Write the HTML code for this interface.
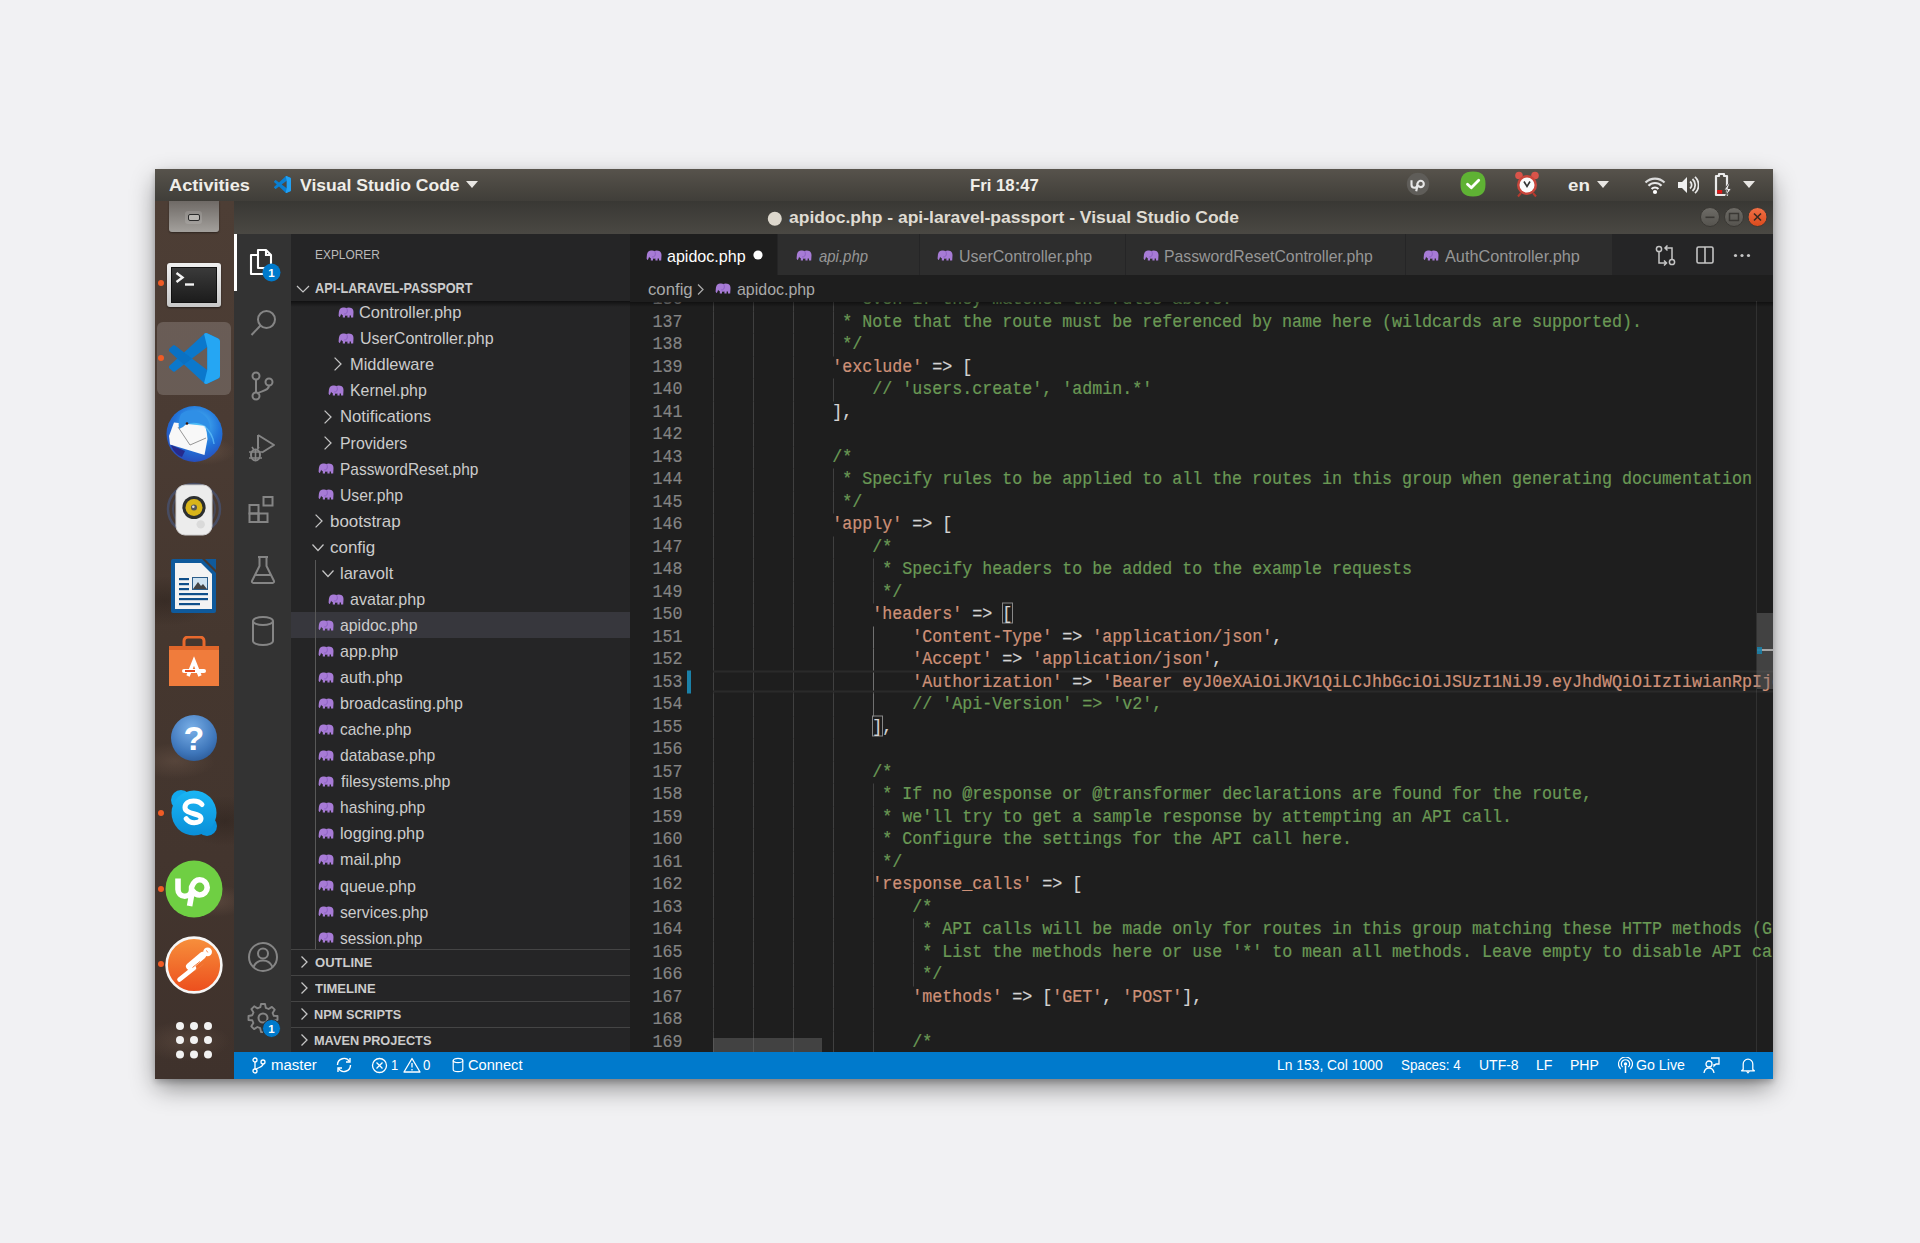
<!DOCTYPE html>
<html><head><meta charset="utf-8">
<style>
*{box-sizing:border-box;margin:0;padding:0}
html,body{width:1920px;height:1243px;overflow:hidden;background:#f1f1f3;font-family:"Liberation Sans",sans-serif}
.a{position:absolute}
.a>svg{display:block}
.clip{position:absolute;overflow:hidden}
.clip>.inner{position:absolute;left:0;top:0}
#win{position:absolute;left:155px;top:169px;width:1618px;height:910px;box-shadow:0 10px 24px -2px rgba(0,0,0,.45),0 3px 6px rgba(0,0,0,.2);background:#1e1e1e}
/* top bar */
#topbar{left:155px;top:169px;width:1618px;height:32px;background:linear-gradient(#57534c,#4a4741 55%,#403e39)}
.tbt{position:absolute;color:#f2f1ee;font-weight:bold;font-size:17.5px;top:176px;white-space:nowrap;text-shadow:0 1px 1px rgba(0,0,0,.4)}
#titlebar{left:234px;top:201px;width:1539px;height:33px;background:linear-gradient(#393834,#4a4843)}
#dock{left:155px;top:201px;width:79px;height:878px;background:
 radial-gradient(ellipse 30px 14px at 50px 250px,rgba(120,95,80,.45),transparent),
 radial-gradient(ellipse 40px 18px at 20px 560px,rgba(115,92,78,.4),transparent),
 radial-gradient(ellipse 35px 16px at 60px 700px,rgba(120,95,80,.4),transparent),
 radial-gradient(ellipse 45px 20px at 30px 840px,rgba(110,88,74,.4),transparent),
 radial-gradient(ellipse 40px 15px at 55px 1000px,rgba(110,88,74,.35),transparent),
 radial-gradient(ellipse 50px 25px at 10px 400px,rgba(30,22,18,.35),transparent),
 radial-gradient(ellipse 40px 25px at 70px 620px,rgba(30,22,18,.35),transparent),
 radial-gradient(ellipse 50px 30px at 20px 950px,rgba(30,22,18,.3),transparent),
 linear-gradient(#4d3e35,#4a3b33 25%,#45372f 50%,#43352e 75%,#3f322c)}
/* activity bar */
#actbar{left:234px;top:234px;width:57px;height:818px;background:#333333}
#sidebar{left:291px;top:234px;width:339px;height:818px;background:#252526}
#editor{left:630px;top:234px;width:1143px;height:818px;background:#1e1e1e}
#statusbar{left:234px;top:1052px;width:1539px;height:27px;background:#007acc;color:#fff;font-size:14px}
.sb{position:absolute;top:5px;white-space:nowrap}
/* tabs */
#tabs{left:630px;top:234px;width:1143px;height:41px;background:#252526}
.tab{position:absolute;top:234px;height:41px;background:#2d2d2d;border-right:1px solid #252526}
.tab .t{position:absolute;top:11px;font-size:15.4px;color:#969696;white-space:nowrap}
.tab .e{position:absolute;top:16px}
.tab .e svg,.e svg{display:block}
.tab.act{background:#1e1e1e}
.tab.act .t{color:#fff}
/* sidebar */
.row{position:absolute;left:291px;width:339px;height:26px}
.row.sel{background:#37373d}
.row .lbl{position:absolute;top:4px;font-size:16.2px;color:#cccccc;white-space:nowrap}
.row .ic{position:absolute;top:6px}
.row .ic .chev{position:absolute;top:-1px}
.eleph{display:block}
.shdr{position:absolute;left:291px;width:339px;height:26px;border-top:1px solid rgba(128,128,128,.35)}
.shdr .lbl{position:absolute;left:24px;top:5px;font-size:13px;font-weight:bold;color:#cccccc;white-space:nowrap;letter-spacing:-.1px}
.shdr .chev{position:absolute;left:5px;top:4px}
/* code */
.ln{position:absolute;height:22.5px;line-height:22.5px;font-family:"Liberation Mono",monospace;font-size:16.667px;white-space:pre;color:#d4d4d4;-webkit-text-stroke:.2px currentColor;transform:translateY(.7px) scaleY(1.1);transform-origin:0 15.6px}
.c{color:#6a9955}.s{color:#ce9178}.p{color:#d4d4d4}
.num{position:absolute;left:630px;width:52.5px;height:22.5px;line-height:22.5px;text-align:right;font-family:"Liberation Mono",monospace;font-size:16.667px;color:#858585;-webkit-text-stroke:.15px currentColor;transform:translateY(.9px) scaleY(1.12);transform-origin:0 15.6px}
.num.act{color:#c6c6c6}
.gd{position:absolute;width:1px;height:22.5px;background:#404040}
.gd.act{background:#707070}
.tx{position:absolute;white-space:nowrap;line-height:1;transform-origin:0 0}
.aico{position:absolute;left:234px;width:57px;height:60px}
</style></head><body>
<div id="win"></div>
<div class="a" id="topbar"></div>
<svg class="a" style="left:274px;top:176px" width="17" height="17" viewBox="0 0 100 100"><path fill="#0a7fd1" d="M96.46 10.8 75.86.87a6.23 6.23 0 0 0-7.1 1.2L29.35 38.04 12.19 25.01a4.16 4.16 0 0 0-5.32.24L1.36 30.26a4.16 4.16 0 0 0 0 6.16L16.24 50 1.36 63.58a4.16 4.16 0 0 0 0 6.16l5.51 5.01a4.16 4.16 0 0 0 5.32.24l17.16-13.03 39.41 35.97a6.23 6.23 0 0 0 7.1 1.2l20.6-9.92A6.25 6.25 0 0 0 100 83.58V16.42a6.25 6.25 0 0 0-3.54-5.63zM75.02 72.7 45.11 50l29.91-22.7z"/><path fill="#22a0f2" d="M75.86.87 96.46 10.8A6.25 6.25 0 0 1 100 16.42v67.16a6.25 6.25 0 0 1-3.54 5.63l-20.6 9.92a6.23 6.23 0 0 1-7.1-1.2L75.02 72.7V27.3L68.76 2.07a6.23 6.23 0 0 1 7.1-1.2z"/></svg>
<svg class="a" style="left:466px;top:181px" width="12" height="8" viewBox="0 0 12 8"><path d="M0 0h12L6 7z" fill="#e8e6e3"/></svg>
<div class="a" id="titlebar"></div>
<div class="a" id="dock"></div>
<!-- top bar right -->
<svg class="a" style="left:1406px;top:172px" width="24" height="24" viewBox="0 0 24 24"><circle cx="12" cy="12" r="11.2" fill="#5f5d59"/><path d="M5.5 8.2v4.6a2.9 2.9 0 0 0 5.8 0v-1c.9-2.2 1.9-3.1 3.3-3.1a3.2 3.2 0 0 1 0 6.4c-1.2 0-2.2-.7-3-1.9l-1.4 6" fill="none" stroke="#e6e6e6" stroke-width="2.1" stroke-linejoin="round"/></svg>
<svg class="a" style="left:1459px;top:170px" width="28" height="28" viewBox="0 0 28 28"><path d="M14 1.5c5 0 7.5 1 9.5 3s3 4.5 3 9.5-1 7.5-3 9.5-4.5 3-9.5 3-7.5-1-9.5-3-3-4.5-3-9.5 1-7.5 3-9.5 4.5-3 9.5-3Z" fill="#5fb234"/><path d="M8.5 14.2l3.8 3.6 7.4-7.6" fill="none" stroke="#fff" stroke-width="2.8" stroke-linecap="round" stroke-linejoin="round"/></svg>
<svg class="a" style="left:1513px;top:170px" width="28" height="28" viewBox="0 0 28 28"><circle cx="6" cy="5.5" r="3.8" fill="#d9544a"/><circle cx="22" cy="5.5" r="3.8" fill="#d9544a"/><path d="M8 23l-3 3.5M20 23l3 3.5" stroke="#b63a2f" stroke-width="2"/><circle cx="14" cy="15" r="10" fill="#c9463b"/><circle cx="14" cy="15" r="7.5" fill="#fbfbfb"/><path d="M11 11.5l3 5 3-5" fill="none" stroke="#333" stroke-width="1.6"/></svg>
<svg class="a" style="left:1597px;top:181px" width="12" height="8" viewBox="0 0 12 8"><path d="M0 0h12L6 7z" fill="#e8e6e3"/></svg>
<svg class="a" style="left:1644px;top:175px" width="22" height="20" viewBox="0 0 22 20"><path d="M1.5 7.5a13.5 13.5 0 0 1 19 0" fill="none" stroke="#dcdcdc" stroke-width="2.2"/><path d="M4.5 10.8a9 9 0 0 1 13 0" fill="none" stroke="#e8e8e8" stroke-width="2.2"/><path d="M7.6 14a4.6 4.6 0 0 1 6.8 0" fill="none" stroke="#f4f4f4" stroke-width="2.2"/><circle cx="11" cy="17" r="2.1" fill="#fff"/></svg>
<svg class="a" style="left:1677px;top:175px" width="22" height="20" viewBox="0 0 22 20"><path d="M1 7h4l5-5v16l-5-5H1z" fill="#f0f0f0"/><path d="M13 6.5a4.5 4.5 0 0 1 0 7M15.5 4a8 8 0 0 1 0 12M18 1.8a11.2 11.2 0 0 1 0 16.4" fill="none" stroke="#e8e8e8" stroke-width="1.8"/></svg>
<svg class="a" style="left:1710px;top:172px" width="26" height="26" viewBox="0 0 26 26"><path d="M6 4h3V2h5v2h3v19H6z" fill="none" stroke="#eaeaea" stroke-width="2.2" stroke-linejoin="round"/><rect x="7.2" y="18" width="5" height="3.6" fill="#e01818"/><path d="M19 11l-5 7h3.5l-2 6.5 6-8h-3.5l2-5.5z" fill="#f2f2f2" stroke="#45423d" stroke-width=".9"/></svg>
<svg class="a" style="left:1743px;top:181px" width="12" height="8" viewBox="0 0 12 8"><path d="M0 0h12L6 7z" fill="#e8e6e3"/></svg>
<!-- title -->
<svg class="a" style="left:767px;top:211px" width="16" height="16" viewBox="0 0 16 16"><circle cx="7.8" cy="7.8" r="7" fill="#dcd7cc"/></svg>
<svg class="a" style="left:1699px;top:206px" width="70" height="22" viewBox="0 0 70 22"><defs><linearGradient id="gb" x1="0" y1="0" x2="0" y2="1"><stop offset="0" stop-color="#6e6c67"/><stop offset="1" stop-color="#55534e"/></linearGradient><linearGradient id="go" x1="0" y1="0" x2="0" y2="1"><stop offset="0" stop-color="#f07046"/><stop offset="1" stop-color="#dc4a1c"/></linearGradient></defs>
<circle cx="11" cy="11" r="9.5" fill="url(#gb)" stroke="#3a3834" stroke-width="1"/><path d="M6.5 11.3h9" stroke="#3a3834" stroke-width="1.6"/>
<circle cx="35" cy="11" r="9.5" fill="url(#gb)" stroke="#3a3834" stroke-width="1"/><rect x="30.5" y="7.5" width="9" height="7" fill="none" stroke="#3a3834" stroke-width="1.5"/>
<circle cx="58.5" cy="11" r="9.5" fill="url(#go)" stroke="#3a3834" stroke-width="1"/><path d="M55 7.5l7 7M62 7.5l-7 7" stroke="#3a2a20" stroke-width="1.6"/></svg>

<div class="a" id="actbar"></div>
<div class="a" id="sidebar"></div>
<div class="a" id="editor"></div>
<div class="a" id="tabs"></div>
<!-- dock icons -->
<div class="a" style="left:169px;top:201px;width:50px;height:31px;border-radius:0 0 3px 3px;background:linear-gradient(#6f6a66,#a3a09c);box-shadow:0 1px 2px rgba(0,0,0,.4)"></div>
<div class="a" style="left:185px;top:211px;width:17px;height:13px;border-radius:3px;background:rgba(255,255,255,.12)"></div>
<div class="a" style="left:188px;top:214px;width:12px;height:7px;border:1.5px solid #2a2a2a;border-radius:2px;background:#b9b6b2"></div>
<!-- terminal -->
<div class="a" style="left:167px;top:263px;width:54px;height:44px;border-radius:3px;background:linear-gradient(#f0f0f0,#c8c8c8);box-shadow:0 1px 2px rgba(0,0,0,.5)"></div>
<div class="a" style="left:171px;top:267px;width:46px;height:36px;background:linear-gradient(#3a3a3a,#1c1c1c);border:1px solid #111"></div>
<svg class="a" style="left:175px;top:271px" width="24" height="16" viewBox="0 0 24 16"><path d="M1.5 2l6 4.5-6 4.5" fill="none" stroke="#f4f4f4" stroke-width="2.4"/><path d="M10 13.5h9" stroke="#f4f4f4" stroke-width="2.4"/></svg>
<!-- vscode highlight -->
<div class="a" style="left:157px;top:322px;width:74px;height:73px;border-radius:6px;background:rgba(255,255,255,.17)"></div>
<svg class="a" style="left:169px;top:333px" width="51" height="51" viewBox="0 0 100 100"><path fill="#0b78cc" d="M96.46 10.8 75.86.87a6.23 6.23 0 0 0-7.1 1.2L29.35 38.04 12.19 25.01a4.16 4.16 0 0 0-5.32.24L1.36 30.26a4.16 4.16 0 0 0 0 6.16L16.24 50 1.36 63.58a4.16 4.16 0 0 0 0 6.16l5.51 5.01a4.16 4.16 0 0 0 5.32.24l17.16-13.03 39.41 35.97a6.23 6.23 0 0 0 7.1 1.2l20.6-9.92A6.25 6.25 0 0 0 100 83.58V16.42a6.25 6.25 0 0 0-3.54-5.63zM75.02 72.7 45.11 50l29.91-22.7z"/><path fill="#25a6f3" d="M75.86.87 96.46 10.8A6.25 6.25 0 0 1 100 16.42v67.16a6.25 6.25 0 0 1-3.54 5.63l-20.6 9.92a6.23 6.23 0 0 1-7.1-1.2L75.02 72.7V27.3L68.76 2.07a6.23 6.23 0 0 1 7.1-1.2z"/><path fill="#0a6dbf" opacity=".7" d="M29.35 38.04 12.19 25.01a4.16 4.16 0 0 0-5.32.24L1.36 30.26a4.16 4.16 0 0 0 0 6.16L16.24 50 29.35 61.96 45.11 50z"/></svg>
<!-- thunderbird -->
<svg class="a" style="left:166px;top:405px" width="57" height="58" viewBox="0 0 57 58"><defs><radialGradient id="tb" cx=".55" cy=".35" r=".75"><stop offset="0" stop-color="#4fc3fa"/><stop offset=".55" stop-color="#2173d9"/><stop offset="1" stop-color="#2a3fb0"/></radialGradient></defs><circle cx="28.5" cy="29" r="28" fill="url(#tb)"/><path d="M8 17.5 40 21 41.5 34 38.5 50 4 39.5 3 31Z" fill="#f8f8f8"/><path d="M12 22 24 40 40 33" fill="none" stroke="#8a8a8a" stroke-width=".9"/><path d="M15 9C21 3 33 4 40 12c5 6 5 14 3 21l-4-12C31 16 21 17 17 22l-4 2c-1-6 0-11 2-15z" fill="#2f8fe6"/><path d="M38 21c5 4 9 10 10 18" stroke="#6fd0ff" stroke-width="1.5" fill="none" opacity=".6"/><circle cx="21" cy="18.5" r="1.3" fill="#3a1408"/><path d="M5 40 19 46 16 52C11 50 7 46 5 40Z" fill="#262a8c"/></svg>
<!-- speaker -->
<svg class="a" style="left:166px;top:481px" width="56" height="57" viewBox="0 0 56 57"><ellipse cx="28" cy="28" rx="26" ry="25" fill="none" stroke="rgba(70,100,160,.45)" stroke-width="2.5"/><ellipse cx="28" cy="28" rx="21" ry="20" fill="none" stroke="rgba(70,100,160,.35)" stroke-width="2"/><rect x="10" y="4" width="36" height="50" rx="9" fill="#ececec"/><rect x="10" y="4" width="36" height="50" rx="9" fill="none" stroke="#d0d0d0"/><circle cx="28" cy="26.5" r="11.6" fill="#2d2f30"/><circle cx="28" cy="26.5" r="8.5" fill="#d9b51a"/><circle cx="28" cy="26.5" r="3" fill="#555"/><circle cx="27.3" cy="25.7" r="1.3" fill="#ddd"/><circle cx="34.7" cy="43.4" r="4.2" fill="#dadada"/></svg>
<!-- writer -->
<svg class="a" style="left:170px;top:557px" width="48" height="57" viewBox="0 0 48 57"><path d="M3 2h29l14 14v38a2 2 0 0 1-2 2H3a2 2 0 0 1-2-2V4a2 2 0 0 1 2-2z" fill="#0f5a9c"/><path d="M5 6h26l11 11v35H5z" fill="#f3f3f3"/><path d="M35 2h11v11z" fill="#0f5a9c"/><g fill="#0f4f8a"><rect x="9" y="21" width="10" height="2.2"/><rect x="9" y="26" width="10" height="2.2"/><rect x="9" y="31" width="10" height="2.2"/><rect x="9" y="36" width="29" height="2.2"/><rect x="9" y="41" width="29" height="2.2"/><rect x="9" y="46" width="21" height="2.2"/></g><rect x="22" y="20" width="16" height="13" fill="#2b5d8a"/><rect x="23" y="21" width="14" height="11" fill="#cfe2f0"/><path d="M23 32l5-7 3 4 2-2 4 5z" fill="#444"/></svg>
<!-- software -->
<svg class="a" style="left:168px;top:636px" width="52" height="51" viewBox="0 0 52 51"><path d="M16 10V5a4 4 0 0 1 4-4h12a4 4 0 0 1 4 4v5" fill="none" stroke="#e8692d" stroke-width="3"/><path d="M1 10h50v40H1z" fill="#f07c3c"/><path d="M1 10h50v4H1z" fill="#e0662a"/><path d="M20 40l6-15 6 15" fill="none" stroke="#fff" stroke-width="3.5"/><rect x="14" y="33" width="24" height="4" rx="2" fill="#fff"/><rect x="17" y="34" width="10" height="2" fill="#e34b20"/></svg>
<!-- help -->
<svg class="a" style="left:170px;top:714px" width="48" height="48" viewBox="0 0 48 48"><defs><radialGradient id="hp" cx=".45" cy=".3" r=".75"><stop offset="0" stop-color="#7ab0e8"/><stop offset=".7" stop-color="#3f77bb"/><stop offset="1" stop-color="#2b5a98"/></radialGradient></defs><circle cx="24" cy="24" r="23" fill="url(#hp)"/><text x="24" y="36" text-anchor="middle" font-family="Liberation Sans" font-weight="bold" font-size="34" fill="#fff">?</text></svg>
<!-- skype -->
<svg class="a" style="left:168px;top:787px" width="52" height="52" viewBox="0 0 52 52"><defs><linearGradient id="sk" x1="0" y1="0" x2="0" y2="1"><stop offset="0" stop-color="#1ab6f5"/><stop offset="1" stop-color="#0a8fd8"/></linearGradient></defs><circle cx="13" cy="13" r="10" fill="#12a8ee"/><circle cx="39" cy="39" r="10" fill="#0b93dc"/><circle cx="26" cy="26" r="22.5" fill="url(#sk)"/><path d="M34 17.5c-2-2.5-5-3.5-8.5-3.5-5 0-8.5 2.6-8.5 6.5 0 7.5 16 5 16 11 0 2.6-2.8 4.2-6.8 4.2-3.6 0-6.3-1.6-8-4" fill="none" stroke="#fff" stroke-width="5" stroke-linecap="round"/></svg>
<!-- upwork -->
<svg class="a" style="left:165px;top:860px" width="58" height="58" viewBox="0 0 58 58"><circle cx="29" cy="29" r="28.5" fill="#6fcf43"/><path d="M13 18.5v11a6.8 6.8 0 0 0 13.6 0V27c2-5 4.6-7.2 8-7.2a7.6 7.6 0 0 1 0 15.2c-3 0-5.2-1.6-7.2-4.4L24.6 46" fill="none" stroke="#fff" stroke-width="5.6" stroke-linejoin="round"/></svg>
<!-- postman -->
<svg class="a" style="left:165px;top:936px" width="58" height="58" viewBox="0 0 58 58"><defs><linearGradient id="pm" x1="0" y1="0" x2="0" y2="1"><stop offset="0" stop-color="#f7903c"/><stop offset="1" stop-color="#ec4e1d"/></linearGradient></defs><circle cx="29" cy="29" r="27.4" fill="url(#pm)" stroke="#f6f6f6" stroke-width="2.6"/><path d="M37.5 19.5 24.5 30.5" stroke="#fff" stroke-width="7" stroke-linecap="round"/><path d="M29 32 14.5 43.5" stroke="#fff" stroke-width="4.6" stroke-linecap="round"/><path d="M27.5 31.5 35 25.5M30 35 38.5 28" stroke="#f27a3a" stroke-width="1"/><path d="M22 32.5l5-1.5-3 3z" fill="#fff"/><circle cx="42.6" cy="15.8" r="4.4" fill="#fff"/><path d="M41 14.5c1 .3 1.6 1 1.8 2" stroke="#f27a3a" stroke-width=".8" fill="none"/></svg>
<!-- apps grid -->
<svg class="a" style="left:172px;top:1018px" width="44" height="44" viewBox="0 0 44 44"><g fill="#f2f2f2"><circle cx="8" cy="8" r="4"/><circle cx="22" cy="8" r="4"/><circle cx="36" cy="8" r="4"/><circle cx="8" cy="22" r="4"/><circle cx="22" cy="22" r="4"/><circle cx="36" cy="22" r="4"/><circle cx="8" cy="36.5" r="4"/><circle cx="22" cy="36.5" r="4"/><circle cx="36" cy="36.5" r="4"/></g></svg>
<!-- running dots -->
<div class="a" style="left:157.5px;top:279.5px;width:6px;height:6px;border-radius:50%;background:#f05c26"></div>
<div class="a" style="left:157.5px;top:355px;width:6px;height:6px;border-radius:50%;background:#f05c26"></div>
<div class="a" style="left:157.5px;top:810px;width:6px;height:6px;border-radius:50%;background:#f05c26"></div>
<div class="a" style="left:157.5px;top:886px;width:6px;height:6px;border-radius:50%;background:#f05c26"></div>
<div class="a" style="left:157.5px;top:961px;width:6px;height:6px;border-radius:50%;background:#f05c26"></div>

<!-- activity bar icons -->
<div class="a" style="left:234px;top:234px;width:3px;height:57px;background:#fff"></div>
<svg class="a" style="left:246px;top:246.5px" width="30" height="30" viewBox="0 0 30 30"><path d="M12 3h8l5 5v13H12z" fill="none" stroke="#fff" stroke-width="2.1" stroke-linejoin="round"/><path d="M20 3v5h5" fill="none" stroke="#fff" stroke-width="2.1"/><path d="M12 8H5v19h13v-6" fill="none" stroke="#fff" stroke-width="2.1" stroke-linejoin="round"/></svg>
<svg class="a" style="left:262px;top:263px" width="19" height="19" viewBox="0 0 19 19"><circle cx="9.5" cy="9.5" r="9" fill="#007acc"/><text x="9.5" y="14" text-anchor="middle" font-family="Liberation Sans" font-weight="bold" font-size="11.5" fill="#fff">1</text></svg>
<svg class="a" style="left:249px;top:308px" width="30" height="30" viewBox="0 0 30 30"><circle cx="17.5" cy="11.5" r="8.5" fill="none" stroke="#858585" stroke-width="2"/><path d="M11.5 17.5 2.5 27" stroke="#858585" stroke-width="2"/></svg>
<svg class="a" style="left:249px;top:371px" width="28" height="30" viewBox="0 0 28 30"><circle cx="7" cy="5" r="3.5" fill="none" stroke="#858585" stroke-width="2"/><circle cx="7" cy="25" r="3.5" fill="none" stroke="#858585" stroke-width="2"/><circle cx="20" cy="11" r="3.5" fill="none" stroke="#858585" stroke-width="2"/><path d="M7 8.5v13M20 14.5c0 5-6 5-12 8" fill="none" stroke="#858585" stroke-width="2"/></svg>
<svg class="a" style="left:247px;top:432px" width="30" height="32" viewBox="0 0 30 32"><path d="M11 3v13M11 3l16 10-12 7.5" fill="none" stroke="#858585" stroke-width="2" stroke-linejoin="round"/><ellipse cx="8.5" cy="23" rx="4.5" ry="5.5" fill="none" stroke="#858585" stroke-width="2"/><path d="M2 20h13M2 26h13M8.5 17v12M5 15l2 3M12 15l-2 3" stroke="#858585" stroke-width="1.6"/></svg>
<svg class="a" style="left:247px;top:494px" width="30" height="30" viewBox="0 0 30 30"><rect x="2.5" y="11" width="9" height="8.5" fill="none" stroke="#858585" stroke-width="2"/><rect x="2.5" y="19.5" width="9" height="8.5" fill="none" stroke="#858585" stroke-width="2"/><rect x="11.5" y="19.5" width="9" height="8.5" fill="none" stroke="#858585" stroke-width="2"/><rect x="16.5" y="3" width="9" height="8.5" fill="none" stroke="#858585" stroke-width="2"/></svg>
<svg class="a" style="left:249px;top:555px" width="28" height="30" viewBox="0 0 28 30"><path d="M9 2h10M10.5 2v9L3 26a1.5 1.5 0 0 0 1.3 2h19.4a1.5 1.5 0 0 0 1.3-2L17.5 11V2" fill="none" stroke="#858585" stroke-width="2" stroke-linejoin="round"/><path d="M6 20h16" stroke="#858585" stroke-width="2"/></svg>
<svg class="a" style="left:249px;top:615px" width="28" height="32" viewBox="0 0 28 32"><ellipse cx="14" cy="6" rx="10" ry="4" fill="none" stroke="#858585" stroke-width="2"/><path d="M4 6v20c0 2.2 4.5 4 10 4s10-1.8 10-4V6" fill="none" stroke="#858585" stroke-width="2"/></svg>
<svg class="a" style="left:247px;top:941px" width="32" height="32" viewBox="0 0 32 32"><circle cx="16" cy="16" r="14" fill="none" stroke="#858585" stroke-width="2"/><circle cx="16" cy="12.5" r="5" fill="none" stroke="#858585" stroke-width="2"/><path d="M6.5 26c2-4.5 5.5-6.5 9.5-6.5s7.5 2 9.5 6.5" fill="none" stroke="#858585" stroke-width="2"/></svg>
<svg class="a" style="left:247px;top:1002px" width="32" height="32" viewBox="0 0 32 32"><path d="M14 2h4l.8 3.8 2.8 1.2 3.3-2.1 2.8 2.8-2.1 3.3 1.2 2.8L30.5 14v4l-3.8.8-1.2 2.8 2.1 3.3-2.8 2.8-3.3-2.1-2.8 1.2L18 30h-4l-.8-3.8-2.8-1.2-3.3 2.1-2.8-2.8 2.1-3.3-1.2-2.8L1.5 18v-4l3.8-.8 1.2-2.8-2.1-3.3 2.8-2.8 3.3 2.1 2.8-1.2z" fill="none" stroke="#858585" stroke-width="1.9" stroke-linejoin="round"/><circle cx="16" cy="16" r="4.5" fill="none" stroke="#858585" stroke-width="2"/></svg>
<svg class="a" style="left:262px;top:1019px" width="19" height="19" viewBox="0 0 19 19"><circle cx="9.5" cy="9.5" r="9" fill="#007acc" stroke="#333" stroke-width="1"/><text x="9.5" y="14" text-anchor="middle" font-family="Liberation Sans" font-weight="bold" font-size="11.5" fill="#fff">1</text></svg>



<!-- sidebar header -->
<svg class="a" style="left:295px;top:281px" width="16" height="16" viewBox="0 0 16 16"><path d="M2 5 8 11 14 5" fill="none" stroke="#c5c5c5" stroke-width="1.2"/></svg>
<div class="a" style="left:291px;top:301px;width:339px;height:6px;background:linear-gradient(rgba(0,0,0,.55),rgba(0,0,0,0))"></div>
<!-- section headers -->
<div class="shdr" style="top:949px"><svg class="chev" viewBox="0 0 16 16" width="16" height="16"><path d="M5.5 2.5 11 8 5.5 13.5" fill="none" stroke="#c5c5c5" stroke-width="1.3"/></svg></div>
<div class="shdr" style="top:975px"><svg class="chev" viewBox="0 0 16 16" width="16" height="16"><path d="M5.5 2.5 11 8 5.5 13.5" fill="none" stroke="#c5c5c5" stroke-width="1.3"/></svg></div>
<div class="shdr" style="top:1001px"><svg class="chev" viewBox="0 0 16 16" width="16" height="16"><path d="M5.5 2.5 11 8 5.5 13.5" fill="none" stroke="#c5c5c5" stroke-width="1.3"/></svg></div>
<div class="shdr" style="top:1027px"><svg class="chev" viewBox="0 0 16 16" width="16" height="16"><path d="M5.5 2.5 11 8 5.5 13.5" fill="none" stroke="#c5c5c5" stroke-width="1.3"/></svg></div>
<!-- tabs -->
<div class="tab act" style="left:630px;width:148px"><div class="e" style="left:16px"><svg class="eleph" viewBox="0 0 16 11" width="16" height="11"><path fill="#a77bd6" d="M5 .6C6.3.2 7.6.5 8.4 1 9.6.3 11.6.2 13.3 1 15 1.9 15.6 3.6 15.5 5.4L15.2 10.6H13V8.4H11.6V10.6H9.4V8.6C8.6 8.8 7.7 8.7 7 8.5V10.6H4.8V8.3C4 8 3.4 7.5 3.1 6.8 2.8 7.9 2.4 9 1.8 10 1 9.7.6 9 .6 8.2.9 6.6.6 4.9 1.4 3 2 1.6 3.3.9 5 .6Z"/><path fill="none" stroke="#8a5fbf" stroke-width=".9" d="M8.4 1C9.3 2 9.5 3.6 9.2 5 8.8 6.6 7.6 7.2 6.2 6.9"/></svg></div><svg class="a" style="left:123px;top:16px" width="10" height="10" viewBox="0 0 10 10"><circle cx="5" cy="5" r="4.6" fill="#fff"/></svg></div>
<div class="tab" style="left:778px;width:142px"><div class="e" style="left:18px"><svg class="eleph" viewBox="0 0 16 11" width="16" height="11"><path fill="#a77bd6" d="M5 .6C6.3.2 7.6.5 8.4 1 9.6.3 11.6.2 13.3 1 15 1.9 15.6 3.6 15.5 5.4L15.2 10.6H13V8.4H11.6V10.6H9.4V8.6C8.6 8.8 7.7 8.7 7 8.5V10.6H4.8V8.3C4 8 3.4 7.5 3.1 6.8 2.8 7.9 2.4 9 1.8 10 1 9.7.6 9 .6 8.2.9 6.6.6 4.9 1.4 3 2 1.6 3.3.9 5 .6Z"/><path fill="none" stroke="#8a5fbf" stroke-width=".9" d="M8.4 1C9.3 2 9.5 3.6 9.2 5 8.8 6.6 7.6 7.2 6.2 6.9"/></svg></div></div>
<div class="tab" style="left:920px;width:206px"><div class="e" style="left:17px"><svg class="eleph" viewBox="0 0 16 11" width="16" height="11"><path fill="#a77bd6" d="M5 .6C6.3.2 7.6.5 8.4 1 9.6.3 11.6.2 13.3 1 15 1.9 15.6 3.6 15.5 5.4L15.2 10.6H13V8.4H11.6V10.6H9.4V8.6C8.6 8.8 7.7 8.7 7 8.5V10.6H4.8V8.3C4 8 3.4 7.5 3.1 6.8 2.8 7.9 2.4 9 1.8 10 1 9.7.6 9 .6 8.2.9 6.6.6 4.9 1.4 3 2 1.6 3.3.9 5 .6Z"/><path fill="none" stroke="#8a5fbf" stroke-width=".9" d="M8.4 1C9.3 2 9.5 3.6 9.2 5 8.8 6.6 7.6 7.2 6.2 6.9"/></svg></div></div>
<div class="tab" style="left:1126px;width:280px"><div class="e" style="left:17px"><svg class="eleph" viewBox="0 0 16 11" width="16" height="11"><path fill="#a77bd6" d="M5 .6C6.3.2 7.6.5 8.4 1 9.6.3 11.6.2 13.3 1 15 1.9 15.6 3.6 15.5 5.4L15.2 10.6H13V8.4H11.6V10.6H9.4V8.6C8.6 8.8 7.7 8.7 7 8.5V10.6H4.8V8.3C4 8 3.4 7.5 3.1 6.8 2.8 7.9 2.4 9 1.8 10 1 9.7.6 9 .6 8.2.9 6.6.6 4.9 1.4 3 2 1.6 3.3.9 5 .6Z"/><path fill="none" stroke="#8a5fbf" stroke-width=".9" d="M8.4 1C9.3 2 9.5 3.6 9.2 5 8.8 6.6 7.6 7.2 6.2 6.9"/></svg></div></div>
<div class="tab" style="left:1406px;width:207px"><div class="e" style="left:17px"><svg class="eleph" viewBox="0 0 16 11" width="16" height="11"><path fill="#a77bd6" d="M5 .6C6.3.2 7.6.5 8.4 1 9.6.3 11.6.2 13.3 1 15 1.9 15.6 3.6 15.5 5.4L15.2 10.6H13V8.4H11.6V10.6H9.4V8.6C8.6 8.8 7.7 8.7 7 8.5V10.6H4.8V8.3C4 8 3.4 7.5 3.1 6.8 2.8 7.9 2.4 9 1.8 10 1 9.7.6 9 .6 8.2.9 6.6.6 4.9 1.4 3 2 1.6 3.3.9 5 .6Z"/><path fill="none" stroke="#8a5fbf" stroke-width=".9" d="M8.4 1C9.3 2 9.5 3.6 9.2 5 8.8 6.6 7.6 7.2 6.2 6.9"/></svg></div></div>
<svg class="a" style="left:1655px;top:245px" width="22" height="22" viewBox="0 0 22 22"><circle cx="4" cy="4" r="2.6" fill="none" stroke="#c5c5c5" stroke-width="1.5"/><circle cx="17" cy="17" r="2.6" fill="none" stroke="#c5c5c5" stroke-width="1.5"/><path d="M4 6.6V18h7M9 15.5l2.5 2.5L9 20.5M17 14.4V3h-7M12.5 0.5 10 3l2.5 2.5" fill="none" stroke="#c5c5c5" stroke-width="1.5"/></svg>
<svg class="a" style="left:1696px;top:246px" width="18" height="18" viewBox="0 0 18 18"><rect x="1" y="1" width="16" height="16" rx="1.5" fill="none" stroke="#c5c5c5" stroke-width="1.6"/><path d="M9 1v16" stroke="#c5c5c5" stroke-width="1.6"/></svg>
<svg class="a" style="left:1733px;top:253px" width="18" height="5" viewBox="0 0 18 5"><circle cx="2.5" cy="2.5" r="1.6" fill="#c5c5c5"/><circle cx="9" cy="2.5" r="1.6" fill="#c5c5c5"/><circle cx="15.5" cy="2.5" r="1.6" fill="#c5c5c5"/></svg>
<!-- breadcrumbs -->
<svg class="a" style="left:695px;top:281px" width="12" height="16" viewBox="0 0 12 16"><path d="M3 3.5 8 8.5 3 13.5" fill="none" stroke="#a9a9a9" stroke-width="1.3"/></svg>
<div class="a" style="left:715px;top:283px"><svg class="eleph" viewBox="0 0 16 11" width="16" height="11"><path fill="#a77bd6" d="M5 .6C6.3.2 7.6.5 8.4 1 9.6.3 11.6.2 13.3 1 15 1.9 15.6 3.6 15.5 5.4L15.2 10.6H13V8.4H11.6V10.6H9.4V8.6C8.6 8.8 7.7 8.7 7 8.5V10.6H4.8V8.3C4 8 3.4 7.5 3.1 6.8 2.8 7.9 2.4 9 1.8 10 1 9.7.6 9 .6 8.2.9 6.6.6 4.9 1.4 3 2 1.6 3.3.9 5 .6Z"/><path fill="none" stroke="#8a5fbf" stroke-width=".9" d="M8.4 1C9.3 2 9.5 3.6 9.2 5 8.8 6.6 7.6 7.2 6.2 6.9"/></svg></div>

<!-- gutter & code -->
<div class="clip" style="left:630px;top:301.5px;width:1143px;height:750.5px">
<div class="inner" style="transform:translate(-630px,-301.5px)">
<div class="gd" style="top:288.5px;left:713px"></div>
<div class="gd" style="top:288.5px;left:753px"></div>
<div class="gd" style="top:288.5px;left:793px"></div>
<div class="gd" style="top:288.5px;left:833px"></div>
<div class="gd" style="top:311.0px;left:713px"></div>
<div class="gd" style="top:311.0px;left:753px"></div>
<div class="gd" style="top:311.0px;left:793px"></div>
<div class="gd" style="top:311.0px;left:833px"></div>
<div class="gd" style="top:333.5px;left:713px"></div>
<div class="gd" style="top:333.5px;left:753px"></div>
<div class="gd" style="top:333.5px;left:793px"></div>
<div class="gd" style="top:333.5px;left:833px"></div>
<div class="gd" style="top:356.0px;left:713px"></div>
<div class="gd" style="top:356.0px;left:753px"></div>
<div class="gd" style="top:356.0px;left:793px"></div>
<div class="gd" style="top:378.5px;left:713px"></div>
<div class="gd" style="top:378.5px;left:753px"></div>
<div class="gd" style="top:378.5px;left:793px"></div>
<div class="gd" style="top:378.5px;left:833px"></div>
<div class="gd" style="top:401.0px;left:713px"></div>
<div class="gd" style="top:401.0px;left:753px"></div>
<div class="gd" style="top:401.0px;left:793px"></div>
<div class="gd" style="top:423.5px;left:713px"></div>
<div class="gd" style="top:423.5px;left:753px"></div>
<div class="gd" style="top:423.5px;left:793px"></div>
<div class="gd" style="top:446.0px;left:713px"></div>
<div class="gd" style="top:446.0px;left:753px"></div>
<div class="gd" style="top:446.0px;left:793px"></div>
<div class="gd" style="top:468.5px;left:713px"></div>
<div class="gd" style="top:468.5px;left:753px"></div>
<div class="gd" style="top:468.5px;left:793px"></div>
<div class="gd" style="top:468.5px;left:833px"></div>
<div class="gd" style="top:491.0px;left:713px"></div>
<div class="gd" style="top:491.0px;left:753px"></div>
<div class="gd" style="top:491.0px;left:793px"></div>
<div class="gd" style="top:491.0px;left:833px"></div>
<div class="gd" style="top:513.5px;left:713px"></div>
<div class="gd" style="top:513.5px;left:753px"></div>
<div class="gd" style="top:513.5px;left:793px"></div>
<div class="gd" style="top:536.0px;left:713px"></div>
<div class="gd" style="top:536.0px;left:753px"></div>
<div class="gd" style="top:536.0px;left:793px"></div>
<div class="gd" style="top:536.0px;left:833px"></div>
<div class="gd" style="top:558.5px;left:713px"></div>
<div class="gd" style="top:558.5px;left:753px"></div>
<div class="gd" style="top:558.5px;left:793px"></div>
<div class="gd" style="top:558.5px;left:833px"></div>
<div class="gd" style="top:558.5px;left:873px"></div>
<div class="gd" style="top:581.0px;left:713px"></div>
<div class="gd" style="top:581.0px;left:753px"></div>
<div class="gd" style="top:581.0px;left:793px"></div>
<div class="gd" style="top:581.0px;left:833px"></div>
<div class="gd" style="top:581.0px;left:873px"></div>
<div class="gd" style="top:603.5px;left:713px"></div>
<div class="gd" style="top:603.5px;left:753px"></div>
<div class="gd" style="top:603.5px;left:793px"></div>
<div class="gd" style="top:603.5px;left:833px"></div>
<div class="gd" style="top:626.0px;left:713px"></div>
<div class="gd" style="top:626.0px;left:753px"></div>
<div class="gd" style="top:626.0px;left:793px"></div>
<div class="gd" style="top:626.0px;left:833px"></div>
<div class="gd act" style="top:626.0px;left:873px"></div>
<div class="gd" style="top:648.5px;left:713px"></div>
<div class="gd" style="top:648.5px;left:753px"></div>
<div class="gd" style="top:648.5px;left:793px"></div>
<div class="gd" style="top:648.5px;left:833px"></div>
<div class="gd act" style="top:648.5px;left:873px"></div>
<div class="gd" style="top:671.0px;left:713px"></div>
<div class="gd" style="top:671.0px;left:753px"></div>
<div class="gd" style="top:671.0px;left:793px"></div>
<div class="gd" style="top:671.0px;left:833px"></div>
<div class="gd act" style="top:671.0px;left:873px"></div>
<div class="gd" style="top:693.5px;left:713px"></div>
<div class="gd" style="top:693.5px;left:753px"></div>
<div class="gd" style="top:693.5px;left:793px"></div>
<div class="gd" style="top:693.5px;left:833px"></div>
<div class="gd act" style="top:693.5px;left:873px"></div>
<div class="gd" style="top:716.0px;left:713px"></div>
<div class="gd" style="top:716.0px;left:753px"></div>
<div class="gd" style="top:716.0px;left:793px"></div>
<div class="gd" style="top:716.0px;left:833px"></div>
<div class="gd" style="top:738.5px;left:713px"></div>
<div class="gd" style="top:738.5px;left:753px"></div>
<div class="gd" style="top:738.5px;left:793px"></div>
<div class="gd" style="top:738.5px;left:833px"></div>
<div class="gd" style="top:761.0px;left:713px"></div>
<div class="gd" style="top:761.0px;left:753px"></div>
<div class="gd" style="top:761.0px;left:793px"></div>
<div class="gd" style="top:761.0px;left:833px"></div>
<div class="gd" style="top:783.5px;left:713px"></div>
<div class="gd" style="top:783.5px;left:753px"></div>
<div class="gd" style="top:783.5px;left:793px"></div>
<div class="gd" style="top:783.5px;left:833px"></div>
<div class="gd" style="top:783.5px;left:873px"></div>
<div class="gd" style="top:806.0px;left:713px"></div>
<div class="gd" style="top:806.0px;left:753px"></div>
<div class="gd" style="top:806.0px;left:793px"></div>
<div class="gd" style="top:806.0px;left:833px"></div>
<div class="gd" style="top:806.0px;left:873px"></div>
<div class="gd" style="top:828.5px;left:713px"></div>
<div class="gd" style="top:828.5px;left:753px"></div>
<div class="gd" style="top:828.5px;left:793px"></div>
<div class="gd" style="top:828.5px;left:833px"></div>
<div class="gd" style="top:828.5px;left:873px"></div>
<div class="gd" style="top:851.0px;left:713px"></div>
<div class="gd" style="top:851.0px;left:753px"></div>
<div class="gd" style="top:851.0px;left:793px"></div>
<div class="gd" style="top:851.0px;left:833px"></div>
<div class="gd" style="top:851.0px;left:873px"></div>
<div class="gd" style="top:873.5px;left:713px"></div>
<div class="gd" style="top:873.5px;left:753px"></div>
<div class="gd" style="top:873.5px;left:793px"></div>
<div class="gd" style="top:873.5px;left:833px"></div>
<div class="gd" style="top:873.5px;left:873px"></div>
<div class="gd" style="top:896.0px;left:713px"></div>
<div class="gd" style="top:896.0px;left:753px"></div>
<div class="gd" style="top:896.0px;left:793px"></div>
<div class="gd" style="top:896.0px;left:833px"></div>
<div class="gd" style="top:896.0px;left:873px"></div>
<div class="gd" style="top:918.5px;left:713px"></div>
<div class="gd" style="top:918.5px;left:753px"></div>
<div class="gd" style="top:918.5px;left:793px"></div>
<div class="gd" style="top:918.5px;left:833px"></div>
<div class="gd" style="top:918.5px;left:873px"></div>
<div class="gd" style="top:918.5px;left:913px"></div>
<div class="gd" style="top:941.0px;left:713px"></div>
<div class="gd" style="top:941.0px;left:753px"></div>
<div class="gd" style="top:941.0px;left:793px"></div>
<div class="gd" style="top:941.0px;left:833px"></div>
<div class="gd" style="top:941.0px;left:873px"></div>
<div class="gd" style="top:941.0px;left:913px"></div>
<div class="gd" style="top:963.5px;left:713px"></div>
<div class="gd" style="top:963.5px;left:753px"></div>
<div class="gd" style="top:963.5px;left:793px"></div>
<div class="gd" style="top:963.5px;left:833px"></div>
<div class="gd" style="top:963.5px;left:873px"></div>
<div class="gd" style="top:963.5px;left:913px"></div>
<div class="gd" style="top:986.0px;left:713px"></div>
<div class="gd" style="top:986.0px;left:753px"></div>
<div class="gd" style="top:986.0px;left:793px"></div>
<div class="gd" style="top:986.0px;left:833px"></div>
<div class="gd" style="top:986.0px;left:873px"></div>
<div class="gd" style="top:1008.5px;left:713px"></div>
<div class="gd" style="top:1008.5px;left:753px"></div>
<div class="gd" style="top:1008.5px;left:793px"></div>
<div class="gd" style="top:1008.5px;left:833px"></div>
<div class="gd" style="top:1008.5px;left:873px"></div>
<div class="gd" style="top:1031.0px;left:713px"></div>
<div class="gd" style="top:1031.0px;left:753px"></div>
<div class="gd" style="top:1031.0px;left:793px"></div>
<div class="gd" style="top:1031.0px;left:833px"></div>
<div class="gd" style="top:1031.0px;left:873px"></div>
<div class="a" style="left:713px;top:670.5px;width:1060px;height:22px;border-top:2px solid #2a2a2a;border-bottom:2px solid #2a2a2a"></div>
<div class="num" style="top:288.5px">136</div>
<div class="num" style="top:311.0px">137</div>
<div class="num" style="top:333.5px">138</div>
<div class="num" style="top:356.0px">139</div>
<div class="num" style="top:378.5px">140</div>
<div class="num" style="top:401.0px">141</div>
<div class="num" style="top:423.5px">142</div>
<div class="num" style="top:446.0px">143</div>
<div class="num" style="top:468.5px">144</div>
<div class="num" style="top:491.0px">145</div>
<div class="num" style="top:513.5px">146</div>
<div class="num" style="top:536.0px">147</div>
<div class="num" style="top:558.5px">148</div>
<div class="num" style="top:581.0px">149</div>
<div class="num" style="top:603.5px">150</div>
<div class="num" style="top:626.0px">151</div>
<div class="num" style="top:648.5px">152</div>
<div class="num" style="top:671.0px">153</div>
<div class="num" style="top:693.5px">154</div>
<div class="num" style="top:716.0px">155</div>
<div class="num" style="top:738.5px">156</div>
<div class="num" style="top:761.0px">157</div>
<div class="num" style="top:783.5px">158</div>
<div class="num" style="top:806.0px">159</div>
<div class="num" style="top:828.5px">160</div>
<div class="num" style="top:851.0px">161</div>
<div class="num" style="top:873.5px">162</div>
<div class="num" style="top:896.0px">163</div>
<div class="num" style="top:918.5px">164</div>
<div class="num" style="top:941.0px">165</div>
<div class="num" style="top:963.5px">166</div>
<div class="num" style="top:986.0px">167</div>
<div class="num" style="top:1008.5px">168</div>
<div class="num" style="top:1031.0px">169</div>
<div class="a" style="left:1002px;top:602.5px;width:11px;height:21px;border:1px solid #888"></div>
<div class="a" style="left:872px;top:715.5px;width:11px;height:21px;border:1px solid #888"></div>
<div class="a" style="left:687px;top:670.5px;width:4px;height:22.5px;background:#1b81a8"></div>

<div class="ln" style="top:288.5px;left:842.3px"><span class="c">* even if they matched the rules above.</span></div>
<div class="ln" style="top:311.0px;left:842.3px"><span class="c">* Note that the route must be referenced by name here (wildcards are supported).</span></div>
<div class="ln" style="top:333.5px;left:842.3px"><span class="c">*/</span></div>
<div class="ln" style="top:356.0px;left:832.3px"><span class="s">'exclude'</span><span class="p"> =&gt; [</span></div>
<div class="ln" style="top:378.5px;left:872.3px"><span class="c">// 'users.create', 'admin.*'</span></div>
<div class="ln" style="top:401.0px;left:832.3px"><span class="p">],</span></div>
<div class="ln" style="top:446.0px;left:832.3px"><span class="c">/*</span></div>
<div class="ln" style="top:468.5px;left:842.3px"><span class="c">* Specify rules to be applied to all the routes in this group when generating documentation</span></div>
<div class="ln" style="top:491.0px;left:842.3px"><span class="c">*/</span></div>
<div class="ln" style="top:513.5px;left:832.3px"><span class="s">'apply'</span><span class="p"> =&gt; [</span></div>
<div class="ln" style="top:536.0px;left:872.3px"><span class="c">/*</span></div>
<div class="ln" style="top:558.5px;left:882.3px"><span class="c">* Specify headers to be added to the example requests</span></div>
<div class="ln" style="top:581.0px;left:882.3px"><span class="c">*/</span></div>
<div class="ln" style="top:603.5px;left:872.3px"><span class="s">'headers'</span><span class="p"> =&gt; [</span></div>
<div class="ln" style="top:626.0px;left:912.3px"><span class="s">'Content-Type'</span><span class="p"> =&gt; </span><span class="s">'application/json'</span><span class="p">,</span></div>
<div class="ln" style="top:648.5px;left:912.3px"><span class="s">'Accept'</span><span class="p"> =&gt; </span><span class="s">'application/json'</span><span class="p">,</span></div>
<div class="ln" style="top:671.0px;left:912.3px"><span class="s">'Authorization'</span><span class="p"> =&gt; </span><span class="s">'Bearer eyJ0eXAiOiJKV1QiLCJhbGciOiJSUzI1NiJ9.eyJhdWQiOiIzIiwianRpIjoiNTc4</span></div>
<div class="ln" style="top:693.5px;left:912.3px"><span class="c">// 'Api-Version' =&gt; 'v2',</span></div>
<div class="ln" style="top:716.0px;left:872.3px"><span class="p">],</span></div>
<div class="ln" style="top:761.0px;left:872.3px"><span class="c">/*</span></div>
<div class="ln" style="top:783.5px;left:882.3px"><span class="c">* If no @response or @transformer declarations are found for the route,</span></div>
<div class="ln" style="top:806.0px;left:882.3px"><span class="c">* we'll try to get a sample response by attempting an API call.</span></div>
<div class="ln" style="top:828.5px;left:882.3px"><span class="c">* Configure the settings for the API call here.</span></div>
<div class="ln" style="top:851.0px;left:882.3px"><span class="c">*/</span></div>
<div class="ln" style="top:873.5px;left:872.3px"><span class="s">'response_calls'</span><span class="p"> =&gt; [</span></div>
<div class="ln" style="top:896.0px;left:912.3px"><span class="c">/*</span></div>
<div class="ln" style="top:918.5px;left:922.3px"><span class="c">* API calls will be made only for routes in this group matching these HTTP methods (GET, PUT, etc)</span></div>
<div class="ln" style="top:941.0px;left:922.3px"><span class="c">* List the methods here or use '*' to mean all methods. Leave empty to disable API calls.</span></div>
<div class="ln" style="top:963.5px;left:922.3px"><span class="c">*/</span></div>
<div class="ln" style="top:986.0px;left:912.3px"><span class="s">'methods'</span><span class="p"> =&gt; [</span><span class="s">'GET'</span><span class="p">, </span><span class="s">'POST'</span><span class="p">],</span></div>
<div class="ln" style="top:1031.0px;left:912.3px"><span class="c">/*</span></div>
</div></div>


<!-- breadcrumb shadow & scrollbars -->
<div class="a" style="left:630px;top:301.5px;width:1143px;height:5px;background:linear-gradient(rgba(0,0,0,.45),rgba(0,0,0,0))"></div>
<div class="a" style="left:1756px;top:301px;width:1px;height:751px;background:rgba(127,127,127,.2)"></div>
<div class="a" style="left:1757px;top:613px;width:16px;height:76px;background:rgba(121,121,121,.4)"></div>
<div class="a" style="left:1757px;top:649px;width:16px;height:2px;background:rgba(190,190,190,.8)"></div>
<div class="a" style="left:1757px;top:647px;width:5px;height:7px;background:rgba(27,129,168,.9)"></div>
<div class="a" style="left:713px;top:1038px;width:109px;height:14px;background:rgba(121,121,121,.4)"></div>

<!-- sidebar tree -->
<div class="clip" style="left:291px;top:301px;width:339px;height:648px">
<div class="inner" style="transform:translate(-291px,-301px)">
<div class="a" style="left:337.50px;top:307.00px"><svg class="eleph" viewBox="0 0 16 11" width="16" height="11"><path fill="#a77bd6" d="M5 .6C6.3.2 7.6.5 8.4 1 9.6.3 11.6.2 13.3 1 15 1.9 15.6 3.6 15.5 5.4L15.2 10.6H13V8.4H11.6V10.6H9.4V8.6C8.6 8.8 7.7 8.7 7 8.5V10.6H4.8V8.3C4 8 3.4 7.5 3.1 6.8 2.8 7.9 2.4 9 1.8 10 1 9.7.6 9 .6 8.2.9 6.6.6 4.9 1.4 3 2 1.6 3.3.9 5 .6Z"/><path fill="none" stroke="#8a5fbf" stroke-width=".9" d="M8.4 1C9.3 2 9.5 3.6 9.2 5 8.8 6.6 7.6 7.2 6.2 6.9"/></svg></div>
<div class="a" style="left:337.50px;top:333.06px"><svg class="eleph" viewBox="0 0 16 11" width="16" height="11"><path fill="#a77bd6" d="M5 .6C6.3.2 7.6.5 8.4 1 9.6.3 11.6.2 13.3 1 15 1.9 15.6 3.6 15.5 5.4L15.2 10.6H13V8.4H11.6V10.6H9.4V8.6C8.6 8.8 7.7 8.7 7 8.5V10.6H4.8V8.3C4 8 3.4 7.5 3.1 6.8 2.8 7.9 2.4 9 1.8 10 1 9.7.6 9 .6 8.2.9 6.6.6 4.9 1.4 3 2 1.6 3.3.9 5 .6Z"/><path fill="none" stroke="#8a5fbf" stroke-width=".9" d="M8.4 1C9.3 2 9.5 3.6 9.2 5 8.8 6.6 7.6 7.2 6.2 6.9"/></svg></div>
<div class="a" style="left:331.70px;top:356.42px"><svg viewBox="0 0 12 16" width="12" height="16"><path d="M2.6 1.6 9 8 2.6 14.4" fill="none" stroke="#c5c5c5" stroke-width="1.25"/></svg></div>
<div class="a" style="left:327.50px;top:385.18px"><svg class="eleph" viewBox="0 0 16 11" width="16" height="11"><path fill="#a77bd6" d="M5 .6C6.3.2 7.6.5 8.4 1 9.6.3 11.6.2 13.3 1 15 1.9 15.6 3.6 15.5 5.4L15.2 10.6H13V8.4H11.6V10.6H9.4V8.6C8.6 8.8 7.7 8.7 7 8.5V10.6H4.8V8.3C4 8 3.4 7.5 3.1 6.8 2.8 7.9 2.4 9 1.8 10 1 9.7.6 9 .6 8.2.9 6.6.6 4.9 1.4 3 2 1.6 3.3.9 5 .6Z"/><path fill="none" stroke="#8a5fbf" stroke-width=".9" d="M8.4 1C9.3 2 9.5 3.6 9.2 5 8.8 6.6 7.6 7.2 6.2 6.9"/></svg></div>
<div class="a" style="left:322.40px;top:408.54px"><svg viewBox="0 0 12 16" width="12" height="16"><path d="M2.6 1.6 9 8 2.6 14.4" fill="none" stroke="#c5c5c5" stroke-width="1.25"/></svg></div>
<div class="a" style="left:322.40px;top:434.60px"><svg viewBox="0 0 12 16" width="12" height="16"><path d="M2.6 1.6 9 8 2.6 14.4" fill="none" stroke="#c5c5c5" stroke-width="1.25"/></svg></div>
<div class="a" style="left:318.40px;top:463.36px"><svg class="eleph" viewBox="0 0 16 11" width="16" height="11"><path fill="#a77bd6" d="M5 .6C6.3.2 7.6.5 8.4 1 9.6.3 11.6.2 13.3 1 15 1.9 15.6 3.6 15.5 5.4L15.2 10.6H13V8.4H11.6V10.6H9.4V8.6C8.6 8.8 7.7 8.7 7 8.5V10.6H4.8V8.3C4 8 3.4 7.5 3.1 6.8 2.8 7.9 2.4 9 1.8 10 1 9.7.6 9 .6 8.2.9 6.6.6 4.9 1.4 3 2 1.6 3.3.9 5 .6Z"/><path fill="none" stroke="#8a5fbf" stroke-width=".9" d="M8.4 1C9.3 2 9.5 3.6 9.2 5 8.8 6.6 7.6 7.2 6.2 6.9"/></svg></div>
<div class="a" style="left:318.40px;top:489.42px"><svg class="eleph" viewBox="0 0 16 11" width="16" height="11"><path fill="#a77bd6" d="M5 .6C6.3.2 7.6.5 8.4 1 9.6.3 11.6.2 13.3 1 15 1.9 15.6 3.6 15.5 5.4L15.2 10.6H13V8.4H11.6V10.6H9.4V8.6C8.6 8.8 7.7 8.7 7 8.5V10.6H4.8V8.3C4 8 3.4 7.5 3.1 6.8 2.8 7.9 2.4 9 1.8 10 1 9.7.6 9 .6 8.2.9 6.6.6 4.9 1.4 3 2 1.6 3.3.9 5 .6Z"/><path fill="none" stroke="#8a5fbf" stroke-width=".9" d="M8.4 1C9.3 2 9.5 3.6 9.2 5 8.8 6.6 7.6 7.2 6.2 6.9"/></svg></div>
<div class="a" style="left:312.50px;top:512.78px"><svg viewBox="0 0 12 16" width="12" height="16"><path d="M2.6 1.6 9 8 2.6 14.4" fill="none" stroke="#c5c5c5" stroke-width="1.25"/></svg></div>
<div class="a" style="left:311.40px;top:542.74px"><svg viewBox="0 0 14 10" width="14" height="10"><path d="M1.5 1.5 7 7.5 12.5 1.5" fill="none" stroke="#c5c5c5" stroke-width="1.25"/></svg></div>
<div class="a" style="left:321.30px;top:568.80px"><svg viewBox="0 0 14 10" width="14" height="10"><path d="M1.5 1.5 7 7.5 12.5 1.5" fill="none" stroke="#c5c5c5" stroke-width="1.25"/></svg></div>
<div class="a" style="left:327.50px;top:593.66px"><svg class="eleph" viewBox="0 0 16 11" width="16" height="11"><path fill="#a77bd6" d="M5 .6C6.3.2 7.6.5 8.4 1 9.6.3 11.6.2 13.3 1 15 1.9 15.6 3.6 15.5 5.4L15.2 10.6H13V8.4H11.6V10.6H9.4V8.6C8.6 8.8 7.7 8.7 7 8.5V10.6H4.8V8.3C4 8 3.4 7.5 3.1 6.8 2.8 7.9 2.4 9 1.8 10 1 9.7.6 9 .6 8.2.9 6.6.6 4.9 1.4 3 2 1.6 3.3.9 5 .6Z"/><path fill="none" stroke="#8a5fbf" stroke-width=".9" d="M8.4 1C9.3 2 9.5 3.6 9.2 5 8.8 6.6 7.6 7.2 6.2 6.9"/></svg></div>
<div class="a" style="left:291px;top:611.92px;width:339px;height:26.1px;background:#37373d"></div>
<div class="a" style="left:318.40px;top:619.72px"><svg class="eleph" viewBox="0 0 16 11" width="16" height="11"><path fill="#a77bd6" d="M5 .6C6.3.2 7.6.5 8.4 1 9.6.3 11.6.2 13.3 1 15 1.9 15.6 3.6 15.5 5.4L15.2 10.6H13V8.4H11.6V10.6H9.4V8.6C8.6 8.8 7.7 8.7 7 8.5V10.6H4.8V8.3C4 8 3.4 7.5 3.1 6.8 2.8 7.9 2.4 9 1.8 10 1 9.7.6 9 .6 8.2.9 6.6.6 4.9 1.4 3 2 1.6 3.3.9 5 .6Z"/><path fill="none" stroke="#8a5fbf" stroke-width=".9" d="M8.4 1C9.3 2 9.5 3.6 9.2 5 8.8 6.6 7.6 7.2 6.2 6.9"/></svg></div>
<div class="a" style="left:318.40px;top:645.78px"><svg class="eleph" viewBox="0 0 16 11" width="16" height="11"><path fill="#a77bd6" d="M5 .6C6.3.2 7.6.5 8.4 1 9.6.3 11.6.2 13.3 1 15 1.9 15.6 3.6 15.5 5.4L15.2 10.6H13V8.4H11.6V10.6H9.4V8.6C8.6 8.8 7.7 8.7 7 8.5V10.6H4.8V8.3C4 8 3.4 7.5 3.1 6.8 2.8 7.9 2.4 9 1.8 10 1 9.7.6 9 .6 8.2.9 6.6.6 4.9 1.4 3 2 1.6 3.3.9 5 .6Z"/><path fill="none" stroke="#8a5fbf" stroke-width=".9" d="M8.4 1C9.3 2 9.5 3.6 9.2 5 8.8 6.6 7.6 7.2 6.2 6.9"/></svg></div>
<div class="a" style="left:318.40px;top:671.84px"><svg class="eleph" viewBox="0 0 16 11" width="16" height="11"><path fill="#a77bd6" d="M5 .6C6.3.2 7.6.5 8.4 1 9.6.3 11.6.2 13.3 1 15 1.9 15.6 3.6 15.5 5.4L15.2 10.6H13V8.4H11.6V10.6H9.4V8.6C8.6 8.8 7.7 8.7 7 8.5V10.6H4.8V8.3C4 8 3.4 7.5 3.1 6.8 2.8 7.9 2.4 9 1.8 10 1 9.7.6 9 .6 8.2.9 6.6.6 4.9 1.4 3 2 1.6 3.3.9 5 .6Z"/><path fill="none" stroke="#8a5fbf" stroke-width=".9" d="M8.4 1C9.3 2 9.5 3.6 9.2 5 8.8 6.6 7.6 7.2 6.2 6.9"/></svg></div>
<div class="a" style="left:318.30px;top:697.90px"><svg class="eleph" viewBox="0 0 16 11" width="16" height="11"><path fill="#a77bd6" d="M5 .6C6.3.2 7.6.5 8.4 1 9.6.3 11.6.2 13.3 1 15 1.9 15.6 3.6 15.5 5.4L15.2 10.6H13V8.4H11.6V10.6H9.4V8.6C8.6 8.8 7.7 8.7 7 8.5V10.6H4.8V8.3C4 8 3.4 7.5 3.1 6.8 2.8 7.9 2.4 9 1.8 10 1 9.7.6 9 .6 8.2.9 6.6.6 4.9 1.4 3 2 1.6 3.3.9 5 .6Z"/><path fill="none" stroke="#8a5fbf" stroke-width=".9" d="M8.4 1C9.3 2 9.5 3.6 9.2 5 8.8 6.6 7.6 7.2 6.2 6.9"/></svg></div>
<div class="a" style="left:318.30px;top:723.96px"><svg class="eleph" viewBox="0 0 16 11" width="16" height="11"><path fill="#a77bd6" d="M5 .6C6.3.2 7.6.5 8.4 1 9.6.3 11.6.2 13.3 1 15 1.9 15.6 3.6 15.5 5.4L15.2 10.6H13V8.4H11.6V10.6H9.4V8.6C8.6 8.8 7.7 8.7 7 8.5V10.6H4.8V8.3C4 8 3.4 7.5 3.1 6.8 2.8 7.9 2.4 9 1.8 10 1 9.7.6 9 .6 8.2.9 6.6.6 4.9 1.4 3 2 1.6 3.3.9 5 .6Z"/><path fill="none" stroke="#8a5fbf" stroke-width=".9" d="M8.4 1C9.3 2 9.5 3.6 9.2 5 8.8 6.6 7.6 7.2 6.2 6.9"/></svg></div>
<div class="a" style="left:318.30px;top:750.02px"><svg class="eleph" viewBox="0 0 16 11" width="16" height="11"><path fill="#a77bd6" d="M5 .6C6.3.2 7.6.5 8.4 1 9.6.3 11.6.2 13.3 1 15 1.9 15.6 3.6 15.5 5.4L15.2 10.6H13V8.4H11.6V10.6H9.4V8.6C8.6 8.8 7.7 8.7 7 8.5V10.6H4.8V8.3C4 8 3.4 7.5 3.1 6.8 2.8 7.9 2.4 9 1.8 10 1 9.7.6 9 .6 8.2.9 6.6.6 4.9 1.4 3 2 1.6 3.3.9 5 .6Z"/><path fill="none" stroke="#8a5fbf" stroke-width=".9" d="M8.4 1C9.3 2 9.5 3.6 9.2 5 8.8 6.6 7.6 7.2 6.2 6.9"/></svg></div>
<div class="a" style="left:318.30px;top:776.08px"><svg class="eleph" viewBox="0 0 16 11" width="16" height="11"><path fill="#a77bd6" d="M5 .6C6.3.2 7.6.5 8.4 1 9.6.3 11.6.2 13.3 1 15 1.9 15.6 3.6 15.5 5.4L15.2 10.6H13V8.4H11.6V10.6H9.4V8.6C8.6 8.8 7.7 8.7 7 8.5V10.6H4.8V8.3C4 8 3.4 7.5 3.1 6.8 2.8 7.9 2.4 9 1.8 10 1 9.7.6 9 .6 8.2.9 6.6.6 4.9 1.4 3 2 1.6 3.3.9 5 .6Z"/><path fill="none" stroke="#8a5fbf" stroke-width=".9" d="M8.4 1C9.3 2 9.5 3.6 9.2 5 8.8 6.6 7.6 7.2 6.2 6.9"/></svg></div>
<div class="a" style="left:318.30px;top:802.14px"><svg class="eleph" viewBox="0 0 16 11" width="16" height="11"><path fill="#a77bd6" d="M5 .6C6.3.2 7.6.5 8.4 1 9.6.3 11.6.2 13.3 1 15 1.9 15.6 3.6 15.5 5.4L15.2 10.6H13V8.4H11.6V10.6H9.4V8.6C8.6 8.8 7.7 8.7 7 8.5V10.6H4.8V8.3C4 8 3.4 7.5 3.1 6.8 2.8 7.9 2.4 9 1.8 10 1 9.7.6 9 .6 8.2.9 6.6.6 4.9 1.4 3 2 1.6 3.3.9 5 .6Z"/><path fill="none" stroke="#8a5fbf" stroke-width=".9" d="M8.4 1C9.3 2 9.5 3.6 9.2 5 8.8 6.6 7.6 7.2 6.2 6.9"/></svg></div>
<div class="a" style="left:318.30px;top:828.20px"><svg class="eleph" viewBox="0 0 16 11" width="16" height="11"><path fill="#a77bd6" d="M5 .6C6.3.2 7.6.5 8.4 1 9.6.3 11.6.2 13.3 1 15 1.9 15.6 3.6 15.5 5.4L15.2 10.6H13V8.4H11.6V10.6H9.4V8.6C8.6 8.8 7.7 8.7 7 8.5V10.6H4.8V8.3C4 8 3.4 7.5 3.1 6.8 2.8 7.9 2.4 9 1.8 10 1 9.7.6 9 .6 8.2.9 6.6.6 4.9 1.4 3 2 1.6 3.3.9 5 .6Z"/><path fill="none" stroke="#8a5fbf" stroke-width=".9" d="M8.4 1C9.3 2 9.5 3.6 9.2 5 8.8 6.6 7.6 7.2 6.2 6.9"/></svg></div>
<div class="a" style="left:318.30px;top:854.26px"><svg class="eleph" viewBox="0 0 16 11" width="16" height="11"><path fill="#a77bd6" d="M5 .6C6.3.2 7.6.5 8.4 1 9.6.3 11.6.2 13.3 1 15 1.9 15.6 3.6 15.5 5.4L15.2 10.6H13V8.4H11.6V10.6H9.4V8.6C8.6 8.8 7.7 8.7 7 8.5V10.6H4.8V8.3C4 8 3.4 7.5 3.1 6.8 2.8 7.9 2.4 9 1.8 10 1 9.7.6 9 .6 8.2.9 6.6.6 4.9 1.4 3 2 1.6 3.3.9 5 .6Z"/><path fill="none" stroke="#8a5fbf" stroke-width=".9" d="M8.4 1C9.3 2 9.5 3.6 9.2 5 8.8 6.6 7.6 7.2 6.2 6.9"/></svg></div>
<div class="a" style="left:318.30px;top:880.32px"><svg class="eleph" viewBox="0 0 16 11" width="16" height="11"><path fill="#a77bd6" d="M5 .6C6.3.2 7.6.5 8.4 1 9.6.3 11.6.2 13.3 1 15 1.9 15.6 3.6 15.5 5.4L15.2 10.6H13V8.4H11.6V10.6H9.4V8.6C8.6 8.8 7.7 8.7 7 8.5V10.6H4.8V8.3C4 8 3.4 7.5 3.1 6.8 2.8 7.9 2.4 9 1.8 10 1 9.7.6 9 .6 8.2.9 6.6.6 4.9 1.4 3 2 1.6 3.3.9 5 .6Z"/><path fill="none" stroke="#8a5fbf" stroke-width=".9" d="M8.4 1C9.3 2 9.5 3.6 9.2 5 8.8 6.6 7.6 7.2 6.2 6.9"/></svg></div>
<div class="a" style="left:318.30px;top:906.38px"><svg class="eleph" viewBox="0 0 16 11" width="16" height="11"><path fill="#a77bd6" d="M5 .6C6.3.2 7.6.5 8.4 1 9.6.3 11.6.2 13.3 1 15 1.9 15.6 3.6 15.5 5.4L15.2 10.6H13V8.4H11.6V10.6H9.4V8.6C8.6 8.8 7.7 8.7 7 8.5V10.6H4.8V8.3C4 8 3.4 7.5 3.1 6.8 2.8 7.9 2.4 9 1.8 10 1 9.7.6 9 .6 8.2.9 6.6.6 4.9 1.4 3 2 1.6 3.3.9 5 .6Z"/><path fill="none" stroke="#8a5fbf" stroke-width=".9" d="M8.4 1C9.3 2 9.5 3.6 9.2 5 8.8 6.6 7.6 7.2 6.2 6.9"/></svg></div>
<div class="a" style="left:318.30px;top:932.44px"><svg class="eleph" viewBox="0 0 16 11" width="16" height="11"><path fill="#a77bd6" d="M5 .6C6.3.2 7.6.5 8.4 1 9.6.3 11.6.2 13.3 1 15 1.9 15.6 3.6 15.5 5.4L15.2 10.6H13V8.4H11.6V10.6H9.4V8.6C8.6 8.8 7.7 8.7 7 8.5V10.6H4.8V8.3C4 8 3.4 7.5 3.1 6.8 2.8 7.9 2.4 9 1.8 10 1 9.7.6 9 .6 8.2.9 6.6.6 4.9 1.4 3 2 1.6 3.3.9 5 .6Z"/><path fill="none" stroke="#8a5fbf" stroke-width=".9" d="M8.4 1C9.3 2 9.5 3.6 9.2 5 8.8 6.6 7.6 7.2 6.2 6.9"/></svg></div>
<div class="tx" style="left:359.48px;top:304.23px;font-size:16.2px;color:#cccccc;transform:scaleX(1.0152);">Controller.php</div>
<div class="tx" style="left:359.51px;top:330.29px;font-size:16.2px;color:#cccccc;transform:scaleX(0.9903);">UserController.php</div>
<div class="tx" style="left:349.68px;top:356.35px;font-size:16.2px;color:#cccccc;transform:scaleX(1.0160);">Middleware</div>
<div class="tx" style="left:349.52px;top:382.41px;font-size:16.2px;color:#cccccc;transform:scaleX(0.9805);">Kernel.php</div>
<div class="tx" style="left:340.37px;top:408.47px;font-size:16.2px;color:#cccccc;transform:scaleX(1.0328);">Notifications</div>
<div class="tx" style="left:340.42px;top:434.53px;font-size:16.2px;color:#cccccc;transform:scaleX(0.9836);">Providers</div>
<div class="tx" style="left:340.44px;top:460.59px;font-size:16.2px;color:#cccccc;transform:scaleX(0.9552);">PasswordReset.php</div>
<div class="tx" style="left:340.43px;top:486.65px;font-size:16.2px;color:#cccccc;transform:scaleX(0.9714);">User.php</div>
<div class="tx" style="left:330.45px;top:512.71px;font-size:16.2px;color:#cccccc;transform:scaleX(1.0455);">bootstrap</div>
<div class="tx" style="left:330.45px;top:538.77px;font-size:16.2px;color:#cccccc;transform:scaleX(1.0488);">config</div>
<div class="tx" style="left:340.38px;top:564.83px;font-size:16.2px;color:#cccccc;transform:scaleX(1.0216);">laravolt</div>
<div class="tx" style="left:349.51px;top:590.89px;font-size:16.2px;color:#cccccc;transform:scaleX(0.9932);">avatar.php</div>
<div class="tx" style="left:340.42px;top:616.95px;font-size:16.2px;color:#cccccc;transform:scaleX(0.9782);">apidoc.php</div>
<div class="tx" style="left:340.41px;top:643.01px;font-size:16.2px;color:#cccccc;transform:scaleX(0.9930);">app.php</div>
<div class="tx" style="left:340.41px;top:669.07px;font-size:16.2px;color:#cccccc;transform:scaleX(0.9935);">auth.php</div>
<div class="tx" style="left:340.31px;top:695.13px;font-size:16.2px;color:#cccccc;transform:scaleX(0.9894);">broadcasting.php</div>
<div class="tx" style="left:340.35px;top:721.19px;font-size:16.2px;color:#cccccc;transform:scaleX(0.9548);">cache.php</div>
<div class="tx" style="left:340.33px;top:747.25px;font-size:16.2px;color:#cccccc;transform:scaleX(0.9701);">database.php</div>
<div class="tx" style="left:341.30px;top:773.31px;font-size:16.2px;color:#cccccc;transform:scaleX(0.9811);">filesystems.php</div>
<div class="tx" style="left:340.33px;top:799.37px;font-size:16.2px;color:#cccccc;transform:scaleX(0.9667);">hashing.php</div>
<div class="tx" style="left:340.29px;top:825.43px;font-size:16.2px;color:#cccccc;transform:scaleX(1.0061);">logging.php</div>
<div class="tx" style="left:340.31px;top:851.49px;font-size:16.2px;color:#cccccc;transform:scaleX(0.9950);">mail.php</div>
<div class="tx" style="left:340.31px;top:877.55px;font-size:16.2px;color:#cccccc;transform:scaleX(0.9920);">queue.php</div>
<div class="tx" style="left:340.33px;top:903.61px;font-size:16.2px;color:#cccccc;transform:scaleX(0.9697);">services.php</div>
<div class="tx" style="left:340.35px;top:929.67px;font-size:16.2px;color:#cccccc;transform:scaleX(0.9529);">session.php</div>
<div class="a" style="left:315px;top:560px;width:1px;height:390px;background:#585858"></div>
</div></div>
<div class="a" style="left:291px;top:255px;width:0;height:0"></div>


<div class="a" id="statusbar"></div>
<svg class="a" style="left:252px;top:1057px" width="14" height="17" viewBox="0 0 14 17"><circle cx="3" cy="3" r="2" fill="none" stroke="#fff" stroke-width="1.3"/><circle cx="3" cy="14" r="2" fill="none" stroke="#fff" stroke-width="1.3"/><circle cx="11" cy="5" r="2" fill="none" stroke="#fff" stroke-width="1.3"/><path d="M3 5v7M11 7c0 3-4 3-7.5 5.5" fill="none" stroke="#fff" stroke-width="1.3"/></svg>
<svg class="a" style="left:335px;top:1057px" width="18" height="16" viewBox="0 0 18 16"><path d="M2.5 8a6.5 6.5 0 0 1 12-3.5M15.5 8a6.5 6.5 0 0 1-12 3.5" fill="none" stroke="#fff" stroke-width="1.4"/><path d="M15 1v4h-4M3 15v-4h4" fill="none" stroke="#fff" stroke-width="1.4"/></svg>
<svg class="a" style="left:371px;top:1057px" width="17" height="17" viewBox="0 0 17 17"><circle cx="8.5" cy="8.5" r="7" fill="none" stroke="#fff" stroke-width="1.3"/><path d="M5.5 5.5l6 6M11.5 5.5l-6 6" stroke="#fff" stroke-width="1.3"/></svg>
<svg class="a" style="left:403px;top:1057px" width="18" height="16" viewBox="0 0 18 16"><path d="M9 1.5 17 15H1z" fill="none" stroke="#fff" stroke-width="1.3" stroke-linejoin="round"/><path d="M9 6v4.5M9 12v1.5" stroke="#fff" stroke-width="1.3"/></svg>
<svg class="a" style="left:452px;top:1057px" width="12" height="16" viewBox="0 0 12 16"><ellipse cx="6" cy="3.5" rx="4.8" ry="2.2" fill="none" stroke="#fff" stroke-width="1.2"/><path d="M1.2 3.5v9c0 1.2 2.2 2.2 4.8 2.2s4.8-1 4.8-2.2v-9" fill="none" stroke="#fff" stroke-width="1.2"/></svg>
<svg class="a" style="left:1618px;top:1057px" width="15" height="17" viewBox="0 0 15 17"><circle cx="7.5" cy="7" r="1.7" fill="#fff"/><path d="M7.5 9v7" stroke="#fff" stroke-width="1.5"/><path d="M4.6 10a4.2 4.2 0 1 1 5.8 0M2.6 12a7 7 0 1 1 9.8 0" fill="none" stroke="#fff" stroke-width="1.2"/></svg>
<svg class="a" style="left:1703px;top:1057px" width="17" height="17" viewBox="0 0 17 17"><circle cx="6" cy="7" r="3" fill="none" stroke="#fff" stroke-width="1.3"/><path d="M1 16c.5-3 2.5-5 5-5s4.5 2 5 5M8 1h8v6h-3l-2 2V7" fill="none" stroke="#fff" stroke-width="1.3"/></svg>
<svg class="a" style="left:1740px;top:1057px" width="16" height="17" viewBox="0 0 16 17"><path d="M3.2 12.5V7a4.8 4.8 0 0 1 9.6 0v5.5l1.6 1.3H1.6z" fill="none" stroke="#fff" stroke-width="1.25" stroke-linejoin="round"/><path d="M6.6 14.2 8 15.8l1.4-1.6" fill="none" stroke="#fff" stroke-width="1.2"/></svg>

<div class="tx" style="left:169.20px;top:177.63px;font-size:16.9px;color:#f0eee9;transform:scaleX(1.0773);font-weight:bold">Activities</div>
<div class="tx" style="left:300.00px;top:177.63px;font-size:16.9px;color:#f0eee9;transform:scaleX(1.0392);font-weight:bold">Visual Studio Code</div>
<div class="tx" style="left:969.98px;top:176.97px;font-size:16.5px;color:#f0eee9;transform:scaleX(1.0152);font-weight:bold">Fri 18:47</div>
<div class="tx" style="left:1567.89px;top:177.94px;font-size:16.9px;color:#f0eee9;transform:scaleX(1.1111);font-weight:bold">en</div>
<div class="tx" style="left:789.00px;top:208.66px;font-size:17.1px;color:#dfdbd2;transform:scaleX(1.0241);font-weight:bold">apidoc.php - api-laravel-passport - Visual Studio Code</div>
<div class="tx" style="left:314.62px;top:248.13px;font-size:13.5px;color:#bbbbbb;transform:scaleX(0.8819);">EXPLORER</div>
<div class="tx" style="left:315.00px;top:281.57px;font-size:13.8px;color:#cccccc;transform:scaleX(0.9199);font-weight:bold">API-LARAVEL-PASSPORT</div>
<div class="tx" style="left:315.00px;top:955.82px;font-size:13.5px;color:#cccccc;transform:scaleX(0.9661);font-weight:bold">OUTLINE</div>
<div class="tx" style="left:315.00px;top:981.73px;font-size:13.5px;color:#cccccc;transform:scaleX(0.9619);font-weight:bold">TIMELINE</div>
<div class="tx" style="left:314.05px;top:1007.73px;font-size:13.5px;color:#cccccc;transform:scaleX(0.9451);font-weight:bold">NPM SCRIPTS</div>
<div class="tx" style="left:314.06px;top:1033.53px;font-size:13.5px;color:#cccccc;transform:scaleX(0.9447);font-weight:bold">MAVEN PROJECTS</div>
<div class="tx" style="left:666.81px;top:247.53px;font-size:16.2px;color:#ffffff;transform:scaleX(0.9923);">apidoc.php</div>
<div class="tx" style="left:818.60px;top:247.53px;font-size:16.2px;color:#969696;transform:scaleX(0.9226);font-style:italic">api.php</div>
<div class="tx" style="left:958.81px;top:247.53px;font-size:16.2px;color:#969696;transform:scaleX(0.9866);">UserController.php</div>
<div class="tx" style="left:1164.43px;top:247.53px;font-size:16.2px;color:#969696;transform:scaleX(0.9746);">PasswordResetController.php</div>
<div class="tx" style="left:1445.20px;top:247.53px;font-size:16.2px;color:#969696;transform:scaleX(1.0060);">AuthController.php</div>
<div class="tx" style="left:648.27px;top:280.73px;font-size:16.2px;color:#a9a9a9;transform:scaleX(1.0341);">config</div>
<div class="tx" style="left:737.22px;top:280.73px;font-size:16.2px;color:#a9a9a9;transform:scaleX(0.9846);">apidoc.php</div>
<div class="tx" style="left:271.31px;top:1056.96px;font-size:15.1px;color:#ffffff;transform:scaleX(0.9911);">master</div>
<div class="tx" style="left:391.14px;top:1056.96px;font-size:15.1px;color:#ffffff;transform:scaleX(0.8571);">1</div>
<div class="tx" style="left:423.00px;top:1056.96px;font-size:15.1px;color:#ffffff;transform:scaleX(0.8750);">0</div>
<div class="tx" style="left:468.33px;top:1056.96px;font-size:15.1px;color:#ffffff;transform:scaleX(0.9691);">Connect</div>
<div class="tx" style="left:1277.38px;top:1056.96px;font-size:15.1px;color:#ffffff;transform:scaleX(0.9184);">Ln 153, Col 1000</div>
<div class="tx" style="left:1401.41px;top:1056.96px;font-size:15.1px;color:#ffffff;transform:scaleX(0.8894);">Spaces: 4</div>
<div class="tx" style="left:1479.07px;top:1056.96px;font-size:15.1px;color:#ffffff;transform:scaleX(0.9268);">UTF-8</div>
<div class="tx" style="left:1536.06px;top:1056.96px;font-size:15.1px;color:#ffffff;transform:scaleX(0.9375);">LF</div>
<div class="tx" style="left:1570.07px;top:1056.96px;font-size:15.1px;color:#ffffff;transform:scaleX(0.9310);">PHP</div>
<div class="tx" style="left:1636.06px;top:1056.96px;font-size:15.1px;color:#ffffff;transform:scaleX(0.9400);">Go Live</div>
</body></html>
